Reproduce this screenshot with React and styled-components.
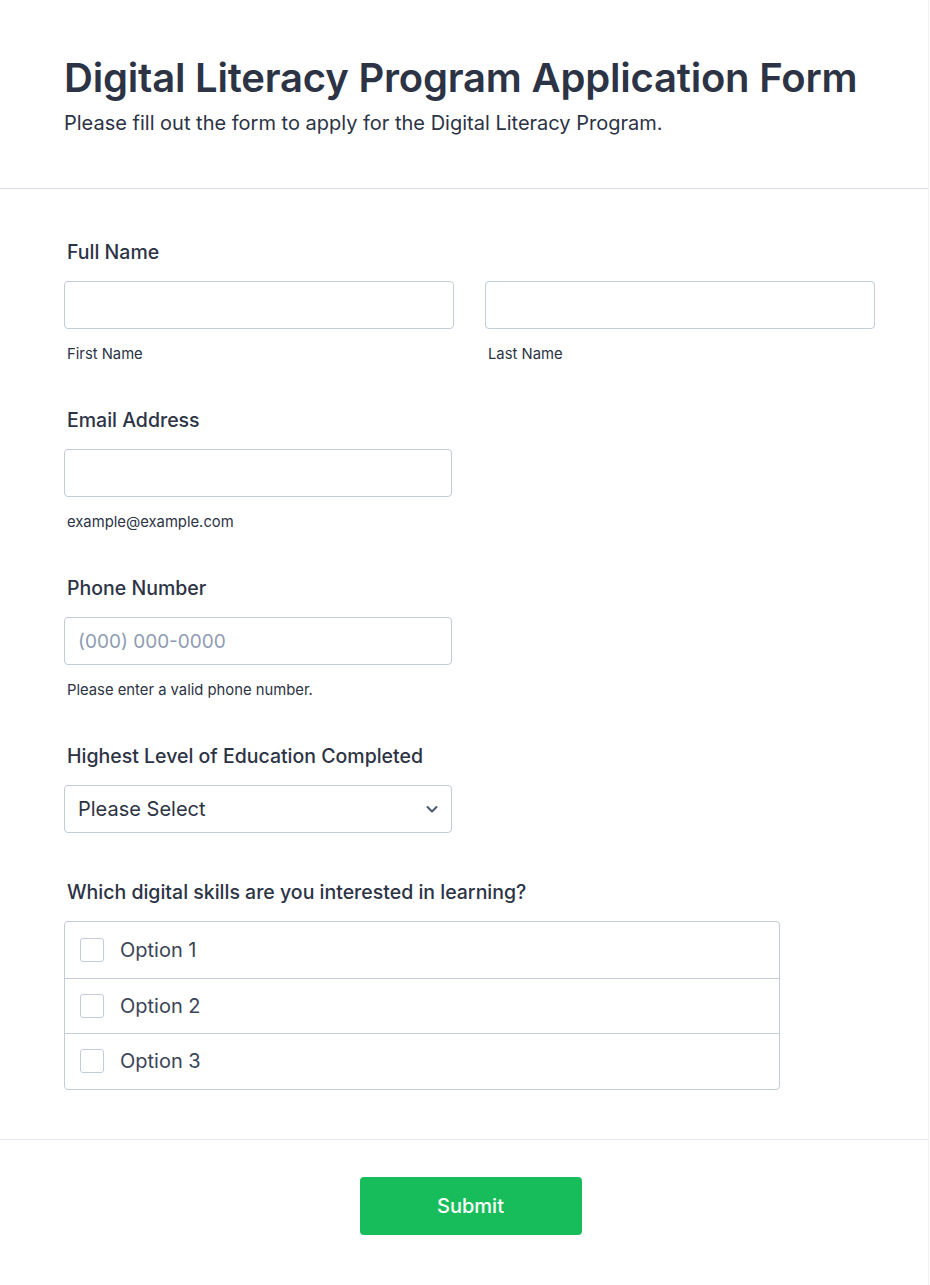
import styled, { createGlobalStyle } from "styled-components";

const GlobalStyle = createGlobalStyle`
    body {
        margin: 0;
        background: #FFFFFF;
        font-family: Inter, "Noto Sans", sans-serif;
        color: #2C3345;
    }
    * { box-sizing: border-box; }
`;

const opcoes = ['Option 1', 'Option 2', 'Option 3'];

export default function App() {
    return (
        <>
            <GlobalStyle />
            <Pagina>
                <Cabecalho>
                    <Titulo>Digital Literacy Program Application Form</Titulo>
                    <Subtitulo>Please fill out the form to apply for the Digital Literacy Program.</Subtitulo>
                </Cabecalho>

                <Formulario>
                    <Campo>
                        <Rotulo>Full Name</Rotulo>
                        <LinhaDupla>
                            <div>
                                <Entrada type="text" />
                                <SubRotulo>First Name</SubRotulo>
                            </div>
                            <div>
                                <Entrada type="text" />
                                <SubRotulo>Last Name</SubRotulo>
                            </div>
                        </LinhaDupla>
                    </Campo>

                    <Campo>
                        <Rotulo>Email Address</Rotulo>
                        <Coluna>
                            <Entrada type="email" />
                            <SubRotulo>example@example.com</SubRotulo>
                        </Coluna>
                    </Campo>

                    <Campo>
                        <Rotulo>Phone Number</Rotulo>
                        <Coluna>
                            <Entrada type="tel" placeholder="(000) 000-0000" />
                            <SubRotulo>Please enter a valid phone number.</SubRotulo>
                        </Coluna>
                    </Campo>

                    <Campo espaco={44}>
                        <Rotulo>Highest Level of Education Completed</Rotulo>
                        <Coluna>
                            <Selecao>
                                <span>Please Select</span>
                                <svg width="14" height="14" viewBox="0 0 14 14">
                                    <polyline points="2.5,5 7,9.5 11.5,5" fill="none" stroke="#4B5873" strokeWidth="2" strokeLinecap="round" strokeLinejoin="round" />
                                </svg>
                            </Selecao>
                        </Coluna>
                    </Campo>

                    <Campo espaco={0}>
                        <Rotulo>Which digital skills are you interested in learning?</Rotulo>
                        <ListaOpcoes>
                            {opcoes.map((o) => (
                                <Opcao key={o}>
                                    <Caixa />
                                    <span>{o}</span>
                                </Opcao>
                            ))}
                        </ListaOpcoes>
                    </Campo>
                </Formulario>

                <Rodape>
                    <BotaoEnviar>Submit</BotaoEnviar>
                </Rodape>
            </Pagina>
        </>
    );
}

const Pagina = styled.div`
    width: 929px;
    min-height: 1285px;
    background: #FFFFFF;
    border-right: 1px solid #F1F2F6;
`;

const Cabecalho = styled.header`
    padding: 54px 64px 51px 64px;
    border-bottom: 1px solid #DADCEA;
`;

const Titulo = styled.h1`
    margin: 0;
    font-size: 40px;
    line-height: 48px;
    font-weight: 600;
    color: #2C3345;
    letter-spacing: -0.2px;
    white-space: nowrap;
`;

const Subtitulo = styled.p`
    margin: 7px 0 0 0;
    font-size: 20px;
    line-height: 28px;
    font-weight: 400;
    color: #2C3345;
`;

const Formulario = styled.div`
    padding: 48px 54px 49px 64px;
`;

const Campo = styled.div`
    margin-bottom: ${props => props.espaco ?? 41}px;
`;

const Rotulo = styled.div`
    padding: 1px 0 0 3px;
    font-size: 19.5px;
    line-height: 28px;
    font-weight: 500;
    color: #2C3345;
    margin-bottom: 15px;
`;

const LinhaDupla = styled.div`
    display: grid;
    grid-template-columns: 390px 390px;
    column-gap: 31px;
`;

const Coluna = styled.div`
    width: 388px;
`;

const Entrada = styled.input`
    display: block;
    width: 100%;
    height: 48px;
    border: 1px solid #C3CAD8;
    border-radius: 4px;
    padding: 0 13px;
    font-family: Inter, "Noto Sans", sans-serif;
    font-size: 19px;
    color: #2C3345;
    background: #FFFFFF;
    outline: none;

    &::placeholder {
        color: #8F9BB3;
    }
`;

const SubRotulo = styled.div`
    padding-left: 3px;
    margin-top: 15px;
    font-size: 14.8px;
    line-height: 20px;
    color: #2C3345;
`;

const Selecao = styled.div`
    display: flex;
    align-items: center;
    justify-content: space-between;
    height: 48px;
    border: 1px solid #C3CAD8;
    border-radius: 4px;
    padding: 0 12px 0 13px;
    font-size: 20px;
    color: #2C3345;

    svg {
        display: block;
    }
`;

const ListaOpcoes = styled.div`
    width: 716px;
    border: 1px solid #C3CAD8;
    border-radius: 4px;
`;

const Opcao = styled.div`
    display: flex;
    align-items: center;
    gap: 16px;
    height: 55.5px;
    padding-left: 15px;
    font-size: 20px;
    color: #3B4458;

    & + & {
        border-top: 1px solid #C3CAD8;
    }
`;

const Caixa = styled.span`
    width: 24px;
    height: 24px;
    border: 1px solid #C3CAD8;
    border-radius: 3px;
    background: #FFFFFF;
`;

const Rodape = styled.footer`
    border-top: 1px solid #E6E8F2;
    display: flex;
    justify-content: center;
    padding: 37px 0 0 13px;
`;

const BotaoEnviar = styled.button`
    width: 222px;
    height: 58px;
    border: none;
    border-radius: 4px;
    background: #18BD5B;
    color: #FFFFFF;
    font-family: Inter, "Noto Sans", sans-serif;
    font-size: 20px;
    font-weight: 500;
    cursor: pointer;
`;
